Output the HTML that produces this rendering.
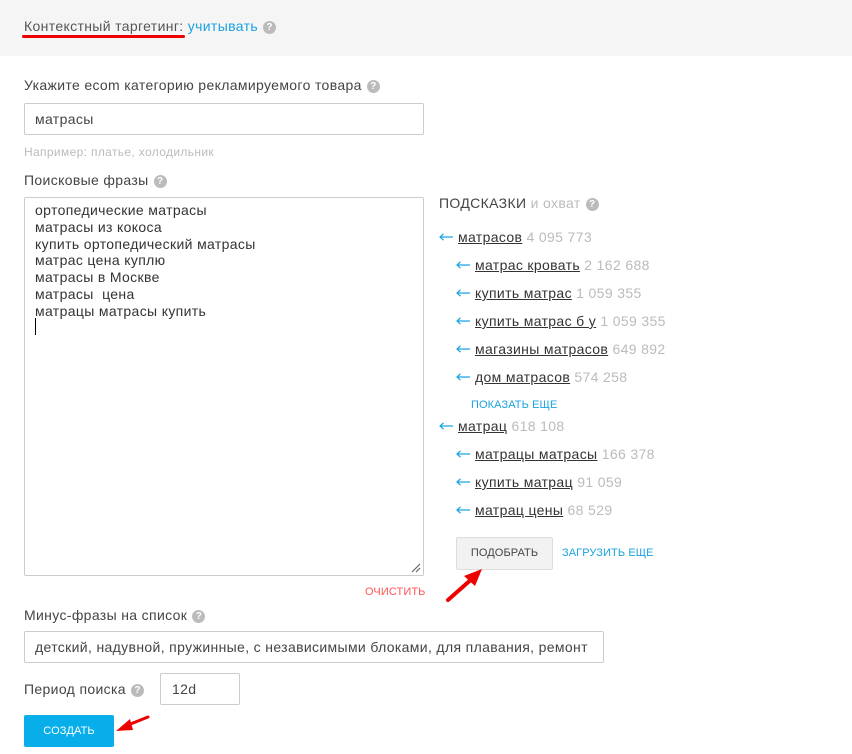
<!DOCTYPE html>
<html><head><meta charset="utf-8"><style>
*{margin:0;padding:0;box-sizing:border-box}
body{width:852px;height:754px;background:#fff;font-family:"Liberation Sans","DejaVu Sans",sans-serif;color:#444;font-size:14px;position:relative;overflow:hidden;letter-spacing:0.35px}
.a{position:absolute;white-space:nowrap;line-height:18px}
.hdr{position:absolute;left:0;top:0;width:852px;height:56px;background:#f5f5f5}
.q{display:inline-block;width:13px;height:13px;border-radius:50%;background:#bbb;color:#fff;font-size:10px;font-weight:bold;line-height:13px;text-align:center;vertical-align:1px;margin-left:5px;letter-spacing:0}
.box{position:absolute;border:1px solid #ccc;background:#fff;border-radius:2px}
.blue{color:#1aa3e0}
.gray{color:#bbb}
.lnk{color:#333;text-decoration:underline}
.arr{display:inline-block;width:14px;height:8px;margin-right:5px;vertical-align:1px}
.sm{font-size:11px;letter-spacing:0.1px}
</style></head><body>
<svg width="0" height="0" style="position:absolute"><defs><symbol id="ar" viewBox="0 0 14 8"><path d="M1 4H14M4.5 0.8L1 4L4.5 7.2" stroke="#1aa3e0" stroke-width="1.2" fill="none"/></symbol></defs></svg>
<div class="hdr"></div>
<div class="a" style="left:24px;top:17px;color:#555">Контекстный таргетинг: <span class="blue">учитывать</span><span class="q">?</span></div>
<div style="position:absolute;left:22px;top:35px;width:163px;height:3px;background:#e00;border-radius:2px"></div>

<div class="a" style="left:24px;top:76px">Укажите ecom категорию рекламируемого товара<span class="q">?</span></div>
<div class="box" style="left:24px;top:103px;width:400px;height:32px"></div>
<div class="a" style="left:35px;top:110px">матрасы</div>
<div class="a" style="left:24px;top:143px;font-size:12px;color:#bbb">Например: платье, холодильник</div>

<div class="a" style="left:24px;top:171px">Поисковые фразы<span class="q">?</span></div>
<div class="box" style="left:24px;top:197px;width:400px;height:379px"></div>
<div class="a" style="left:35px;top:202px;line-height:16.8px;color:#333">ортопедические матрасы<br>матрасы из кокоса<br>купить ортопедический матрасы<br>матрас цена куплю<br>матрасы в Москве<br>матрасы&nbsp; цена<br>матрацы матрасы купить</div>
<div style="position:absolute;left:35px;top:318px;width:1px;height:17px;background:#000"></div>
<svg style="position:absolute;left:410px;top:562px" width="12" height="12"><path d="M2 10L10 2M6 10L10 6" stroke="#666" stroke-width="1.2"/></svg>
<div class="a sm" style="left:365px;top:583px;color:#f55">ОЧИСТИТЬ</div>

<div class="a" style="left:439px;top:194px;color:#444">ПОДСКАЗКИ <span class="gray">и охват</span><span class="q">?</span></div>
<div class="a" style="left:439px;top:228px"><svg class="arr"><use href="#ar"/></svg><span class="lnk">матрасов</span> <span class="gray">4 095 773</span></div>
<div class="a" style="left:456px;top:256px"><svg class="arr"><use href="#ar"/></svg><span class="lnk">матрас кровать</span> <span class="gray">2 162 688</span></div>
<div class="a" style="left:456px;top:284px"><svg class="arr"><use href="#ar"/></svg><span class="lnk">купить матрас</span> <span class="gray">1 059 355</span></div>
<div class="a" style="left:456px;top:312px"><svg class="arr"><use href="#ar"/></svg><span class="lnk">купить матрас б у</span> <span class="gray">1 059 355</span></div>
<div class="a" style="left:456px;top:340px"><svg class="arr"><use href="#ar"/></svg><span class="lnk">магазины матрасов</span> <span class="gray">649 892</span></div>
<div class="a" style="left:456px;top:368px"><svg class="arr"><use href="#ar"/></svg><span class="lnk">дом матрасов</span> <span class="gray">574 258</span></div>
<div class="a sm blue" style="left:471px;top:396px">ПОКАЗАТЬ ЕЩЕ</div>
<div class="a" style="left:439px;top:417px"><svg class="arr"><use href="#ar"/></svg><span class="lnk">матрац</span> <span class="gray">618 108</span></div>
<div class="a" style="left:456px;top:445px"><svg class="arr"><use href="#ar"/></svg><span class="lnk">матрацы матрасы</span> <span class="gray">166 378</span></div>
<div class="a" style="left:456px;top:473px"><svg class="arr"><use href="#ar"/></svg><span class="lnk">купить матрац</span> <span class="gray">91 059</span></div>
<div class="a" style="left:456px;top:501px"><svg class="arr"><use href="#ar"/></svg><span class="lnk">матрац цены</span> <span class="gray">68 529</span></div>

<div style="position:absolute;left:456px;top:537px;width:97px;height:33px;background:#f2f2f2;border:1px solid #ddd;border-radius:2px;font-size:11px;line-height:31px;text-align:center;color:#444;letter-spacing:0.1px">ПОДОБРАТЬ</div>
<div class="a sm blue" style="left:562px;top:544px">ЗАГРУЗИТЬ ЕЩЕ</div>

<div class="a" style="left:24px;top:606px">Минус-фразы на список<span class="q">?</span></div>
<div class="box" style="left:24px;top:631px;width:580px;height:32px"></div>
<div class="a" style="left:35px;top:638px">детский, надувной, пружинные, с независимыми блоками, для плавания, ремонт</div>

<div class="a" style="left:24px;top:680px">Период поиска<span class="q">?</span></div>
<div class="box" style="left:160px;top:673px;width:80px;height:32px"></div>
<div class="a" style="left:172px;top:680px">12d</div>

<div style="position:absolute;left:24px;top:715px;width:90px;height:32px;background:#07aeea;border-radius:2px;color:#fff;font-size:11px;line-height:32px;text-align:center;letter-spacing:0.1px">СОЗДАТЬ</div>

<svg style="position:absolute;left:0;top:0" width="852" height="754">
<path d="M448 600L474 577" stroke="#e00" stroke-width="4" stroke-linecap="round"/>
<path d="M482 569L464 576L475 586Z" fill="#e00"/>
<path d="M148 717L128 725" stroke="#e00" stroke-width="3" stroke-linecap="round"/>
<path d="M116 731L130 719L133 730Z" fill="#e00"/>
</svg>
</body></html>
